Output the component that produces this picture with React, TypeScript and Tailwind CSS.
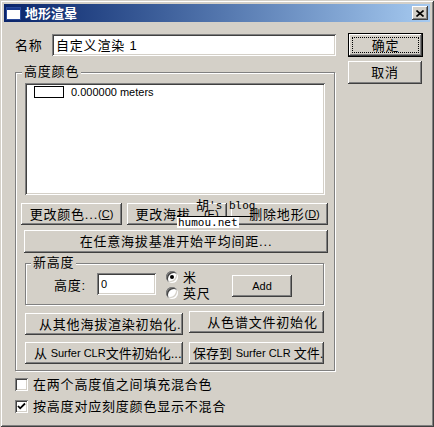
import React from "react";

const raised =
  "shadow-[inset_-1px_-1px_#404040,inset_1px_1px_#ffffff,inset_-2px_-2px_#808080,inset_2px_2px_#d4d0c8]";
const sunken =
  "shadow-[inset_1px_1px_#808080,inset_-1px_-1px_#ffffff,inset_2px_2px_#404040,inset_-2px_-2px_#d4d0c8]";

function Btn({ className = "", children }: { className?: string; children: React.ReactNode }) {
  return (
    <div
      className={`bg-[#d4d0c8] ${raised} flex items-center justify-center whitespace-nowrap overflow-hidden leading-none ${className}`}
    >
      {children}
    </div>
  );
}

function L({ children }: { children: React.ReactNode }) {
  return <span className="text-[11px] tracking-normal">{children}</span>;
}

function Radio({ checked }: { checked?: boolean }) {
  return (
    <div
      className={`w-[12px] h-[12px] rounded-full bg-white ${sunken} flex items-center justify-center shrink-0`}
    >
      {checked && <div className="w-[4px] h-[4px] rounded-full bg-black" />}
    </div>
  );
}

function Check({ checked }: { checked?: boolean }) {
  return (
    <div className={`w-[13px] h-[13px] bg-white ${sunken} flex items-center justify-center shrink-0`}>
      {checked && (
        <svg width="9" height="9" viewBox="0 0 9 9">
          <path d="M1 4 L3.2 6.3 L8 1.5" fill="none" stroke="#000" strokeWidth="1.8" />
        </svg>
      )}
    </div>
  );
}

export default function App() {
  return (
    <div className="w-[434px] h-[427px] bg-[#d4d0c8] relative p-[4px] flex flex-col text-black text-[13px] tracking-[0.8px] font-['Liberation_Sans','Noto_Sans_CJK_SC',sans-serif] shadow-[inset_1px_1px_#d4d0c8,inset_-1px_-1px_#404040,inset_2px_2px_#ffffff,inset_-2px_-2px_#808080]">
      {/* title bar */}
      <div className="h-[18px] bg-gradient-to-r from-[#0a246a] to-[#a6caf0] flex items-center pl-[2px] pr-[2px] shrink-0">
        <div className="w-[15px] h-[13px] bg-white border border-[#2a4a9a] flex flex-col shrink-0">
          <div className="h-[2px] bg-[#1a3a8f]" />
        </div>
        <div className="ml-[4px] text-white font-bold text-[13px] leading-none tracking-[0px]">地形渲晕</div>
        <div className={`ml-auto w-[16px] h-[14px] bg-[#d4d0c8] ${raised} flex items-center justify-center`}>
          <svg width="8" height="7" viewBox="0 0 8 7">
            <path d="M0.5 0.5 L7.5 6.5 M7.5 0.5 L0.5 6.5" stroke="#000" strokeWidth="1.6" />
          </svg>
        </div>
      </div>

      {/* content */}
      <div className="flex pl-[11px]">
        {/* left column */}
        <div className="w-[321px] flex flex-col">
          <div className="mt-[12px] h-[22px] flex items-center">
            <div className="w-[37px] leading-none">名称</div>
            <div className={`w-[284px] h-[22px] bg-white ${sunken} flex items-center pl-[4px] leading-none`}>
              自定义渲染 1
            </div>
          </div>

          {/* group 高度颜色 */}
          <div className="mt-[16px] w-[320px] h-[299px] border border-[#808080] shadow-[inset_1px_1px_#ffffff,1px_1px_#ffffff] relative flex flex-col">
            <div className="absolute left-[6px] top-[-8px] px-[2px] bg-[#d4d0c8] leading-none">高度颜色</div>

            <div className={`ml-[9px] mt-[10px] w-[300px] h-[112px] bg-white ${sunken} pt-[2px]`}>
              <div className="flex items-center h-[12px] mt-[1px]">
                <div className="ml-[9px] w-[30px] h-[12px] border border-black bg-white" />
                <div className="ml-[7px] text-[11px] tracking-normal leading-none">0.000000 meters</div>
              </div>
            </div>

            <div className="mt-[8px] ml-[5px] flex h-[22px]">
              <Btn className="w-[101px] h-[22px]">
                更改颜色...<L>(<u>C</u>)</L>
              </Btn>
              <Btn className="ml-[5px] w-[100px] h-[22px]">
                更改海拔...<L>(<u>E</u>)</L>
              </Btn>
              <Btn className="ml-[4px] w-[97px] h-[22px] pl-[10px]">
                删除地形<L>(<u>D</u>)</L>
              </Btn>
            </div>

            <Btn className="mt-[5px] ml-[8px] w-[304px] h-[23px]">在任意海拔基准开始平均间距...</Btn>

            {/* sub group 新高度 */}
            <div className="mt-[10px] ml-[9px] w-[299px] h-[42px] border border-[#808080] shadow-[inset_1px_1px_#ffffff,1px_1px_#ffffff] relative flex items-start">
              <div className="absolute left-[5px] top-[-8px] px-[2px] bg-[#d4d0c8] leading-none">新高度</div>
              <div className="ml-[28px] mt-[15px] w-[43px] leading-none">高度:</div>
              <div className={`mt-[9px] w-[59px] h-[22px] bg-white ${sunken} flex items-center pl-[4px] leading-none`}>
                <L>0</L>
              </div>
              <div className="ml-[10px] mt-[7px] w-[66px] flex flex-col">
                <div className="flex items-center h-[12px]">
                  <Radio checked />
                  <div className="ml-[5px] leading-none">米</div>
                </div>
                <div className="flex items-center h-[12px] mt-[4px]">
                  <Radio />
                  <div className="ml-[5px] leading-none">英尺</div>
                </div>
              </div>
              <Btn className="mt-[11px] w-[60px] h-[22px]">
                <L>Add</L>
              </Btn>
            </div>

            <div className="mt-[6px] ml-[9px] flex items-start">
              <Btn className="mt-[2px] w-[158px] h-[22px] justify-start pl-[14px]">从其他海拔渲染初始化.</Btn>
              <Btn className="ml-[6px] w-[135px] h-[22px] pl-[12px]">从色谱文件初始化</Btn>
            </div>

            <div className="mt-[7px] ml-[9px] flex items-start">
              <Btn className="w-[158px] h-[22px] justify-start pl-[9px] tracking-[0px]">
                <span>从&nbsp;</span>
                <L>Surfer CLR</L>
                <span>文件初始化...</span>
              </Btn>
              <Btn className="ml-[6px] w-[135px] h-[22px] justify-start pl-[4px] tracking-[0px]">
                <span>保存到&nbsp;</span>
                <L>Surfer CLR&nbsp;</L>
                <span>文件.</span>
              </Btn>
            </div>
          </div>

          <div className="mt-[7px] flex items-center h-[13px]">
            <Check />
            <div className="ml-[5px] leading-none">在两个高度值之间填充混合色</div>
          </div>
          <div className="mt-[9px] flex items-center h-[13px]">
            <Check checked />
            <div className="ml-[5px] leading-none">按高度对应刻度颜色显示不混合</div>
          </div>
        </div>

        {/* right column */}
        <div className="ml-[12px] flex flex-col">
          <div className="mt-[11px] w-[75px] h-[24px] border border-black bg-[#d4d0c8] shadow-[inset_-1px_-1px_#404040,inset_1px_1px_#ffffff,inset_-2px_-2px_#808080,inset_2px_2px_#d4d0c8] p-[3px]">
            <div className="w-full h-full border border-dotted border-black flex items-center justify-center leading-none">
              确定
            </div>
          </div>
          <Btn className="mt-[4px] w-[74px] h-[23px]">取消</Btn>
        </div>
      </div>

      {/* watermark overlay */}
      <div className="absolute left-[177px] top-[198px] flex flex-col items-start whitespace-nowrap font-['DejaVu_Sans_Mono','Noto_Sans_CJK_SC',monospace] tracking-normal leading-none">
        <div className="ml-[19px] leading-none h-[15px] flex items-center">
          <span className="text-[13px]">胡</span>
          <span className="text-[11px]">'s blog</span>
        </div>
        <div className="w-[76px] h-[1px] bg-black mt-[3px]" />
        <div className="bg-white text-[11px] leading-none px-[1px] h-[11px] flex items-center">humou.net</div>
      </div>
    </div>
  );
}
